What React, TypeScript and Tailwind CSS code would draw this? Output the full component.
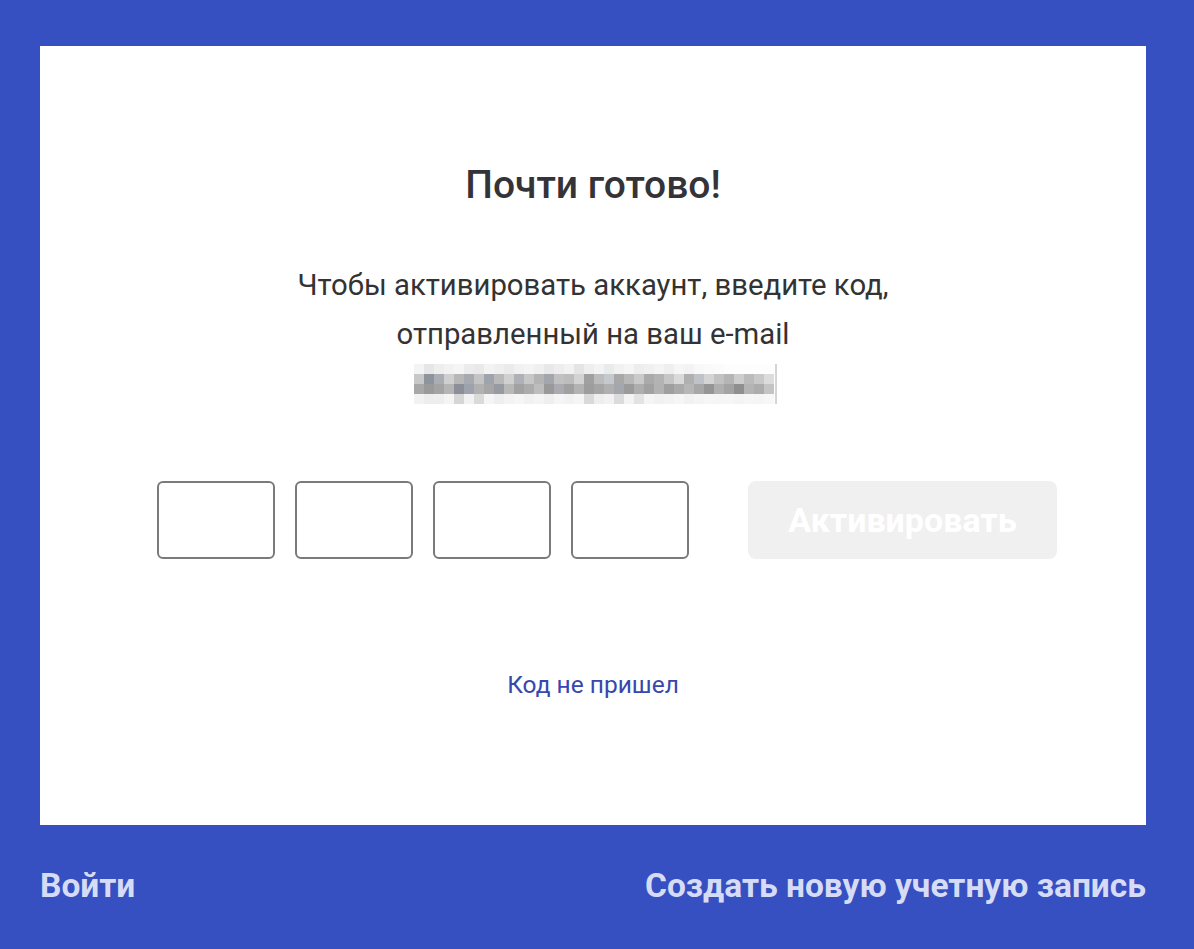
import { useState } from "react";

const blurRows = [
  ["#f4f4f4", "#e6e6e6", "#eeeeee", "#f2f2f2", "#f5f5f5", "#ececec", "#e9e9e9", "#f3f3f3", "#efefef", "#ebebeb", "#f1f1f1", "#f4f4f4", "#f0f0f0", "#e8e8e8", "#ededed", "#f2f2f2", "#e4e4e4", "#eeeeee", "#f3f3f3", "#eaeaea", "#f1f1f1", "#f5f5f5", "#ededed", "#f0f0f0", "#f4f4f4", "#efefef", "#f6f6f6", "#f3f3f3", "#f8f8f8", "#fafafa", "#fbfbfb", "#fdfdfd", "#fdfdfd", "#fdfdfd", "#fdfdfd", "#fdfdfd"],
  ["#c8c8c8", "#8f939c", "#a9adb4", "#cfcfcf", "#b7b7b7", "#a7aab0", "#c4c4c4", "#9fa3ab", "#b9b9b9", "#d0d0d0", "#aeb1b6", "#c7c7c7", "#b4b4b4", "#a3a6ad", "#c1c1c1", "#bdbdbd", "#d3d3d3", "#a0a0a0", "#bcbcbc", "#c5c8cc", "#a8a8a8", "#b8b8b8", "#cacaca", "#aaaaaa", "#b3b3b3", "#c6c6c6", "#dadada", "#b0b0b0", "#bfc3c8", "#d4d4d4", "#c2c2c2", "#b5b5b5", "#cdcdcd", "#bbbbbb", "#c9c9c9", "#dcdcdc"],
  ["#a8a8a8", "#9a9a9a", "#a3a3a3", "#b5b5b5", "#8c8f98", "#9ea2ac", "#b1b1b1", "#a6a6a6", "#979aa1", "#b8b8b8", "#a2a2a2", "#acacac", "#bdbdbd", "#999999", "#a9abb0", "#a0a0a0", "#b3b3b3", "#9d9d9d", "#a5a5a5", "#b0b0b0", "#a4a7ad", "#9b9b9b", "#aeaeae", "#a1a1a1", "#b2b2b2", "#9f9f9f", "#aaaaaa", "#b6b6b6", "#a7a7a7", "#959595", "#afafaf", "#a3a3a3", "#8f8f8f", "#b4b4b4", "#acacac", "#c4c4c4"],
  ["#f2f2f2", "#ededed", "#eeeeee", "#f4f4f4", "#d6d6d6", "#f2f2f2", "#dadada", "#f5f5f5", "#eeeeee", "#f3f3f3", "#f6f6f6", "#f1f1f1", "#f4f4f4", "#efefef", "#f5f5f5", "#f2f2f2", "#f5f5f5", "#d9d9d9", "#eeeeee", "#f2f2f2", "#dcdcdc", "#f4f4f4", "#e3e3e3", "#f5f5f5", "#f1f1f1", "#f3f3f3", "#f6f6f6", "#f1f1f1", "#f4f4f4", "#f6f6f6", "#f5f5f5", "#f6f6f6", "#f4f4f4", "#f6f6f6", "#f5f5f5", "#f7f7f7"],
];

function BlurredEmail() {
  return (
    <div className="flex items-stretch mt-[5px] ml-[4px]">
      <div className="flex flex-col">
        {blurRows.map((row, r) => (
          <div key={r} className="flex">
            {row.map((c, i) => (
              <div key={i} className="w-[10px] h-[10px]" style={{ backgroundColor: c }} />
            ))}
          </div>
        ))}
      </div>
      <div className="w-[2px] bg-[#d4d4d4] ml-[1px]" />
    </div>
  );
}

export default function App() {
  const [code, setCode] = useState(["", "", "", ""]);
  const filled = code.every((c) => c.length > 0);

  return (
    <div
      className="min-h-[949px] w-full bg-[#3750c1] pl-[40px] pr-[48px] pt-[46px] flex flex-col"
      style={{ fontFamily: "Roboto, 'Open Sans', sans-serif" }}
    >
      <div className="bg-white h-[779px] flex flex-col items-center pt-[115px]">
        <h1 className="text-[39px] leading-[48px] font-medium text-[#333338]">Почти готово!</h1>

        <p className="mt-[52px] text-[29.3px] leading-[49px] text-[#333333] text-center">
          Чтобы активировать аккаунт, введите код,
          <br />
          отправленный на ваш e-mail
        </p>
        <BlurredEmail />

        <div className="flex items-center mt-[77px] ml-[28px]">
          <div className="flex gap-[20px]">
            {code.map((v, i) => (
              <input
                key={i}
                value={v}
                maxLength={1}
                onChange={(e) => {
                  const next = [...code];
                  next[i] = e.target.value;
                  setCode(next);
                }}
                className="w-[118px] h-[78px] rounded-[6px] border-2 border-[#7a7a7a] text-center text-[32px] text-[#333] outline-none"
              />
            ))}
          </div>
          <button
            disabled={!filled}
            className="ml-[59px] w-[309px] h-[78px] rounded-[8px] bg-[#f0f0f0] text-white text-[34px] font-bold"
          >
            Активировать
          </button>
        </div>

        <a href="#" className="mt-[111px] text-[24.5px] leading-[30px] text-[#3747ae]">
          Код не пришел
        </a>
      </div>

      <div className="flex justify-between items-center pt-[36px] text-[33.5px] leading-[50px] font-bold text-[#d7dcf6]">
        <a href="#">Войти</a>
        <a href="#">Создать новую учетную запись</a>
      </div>
    </div>
  );
}
